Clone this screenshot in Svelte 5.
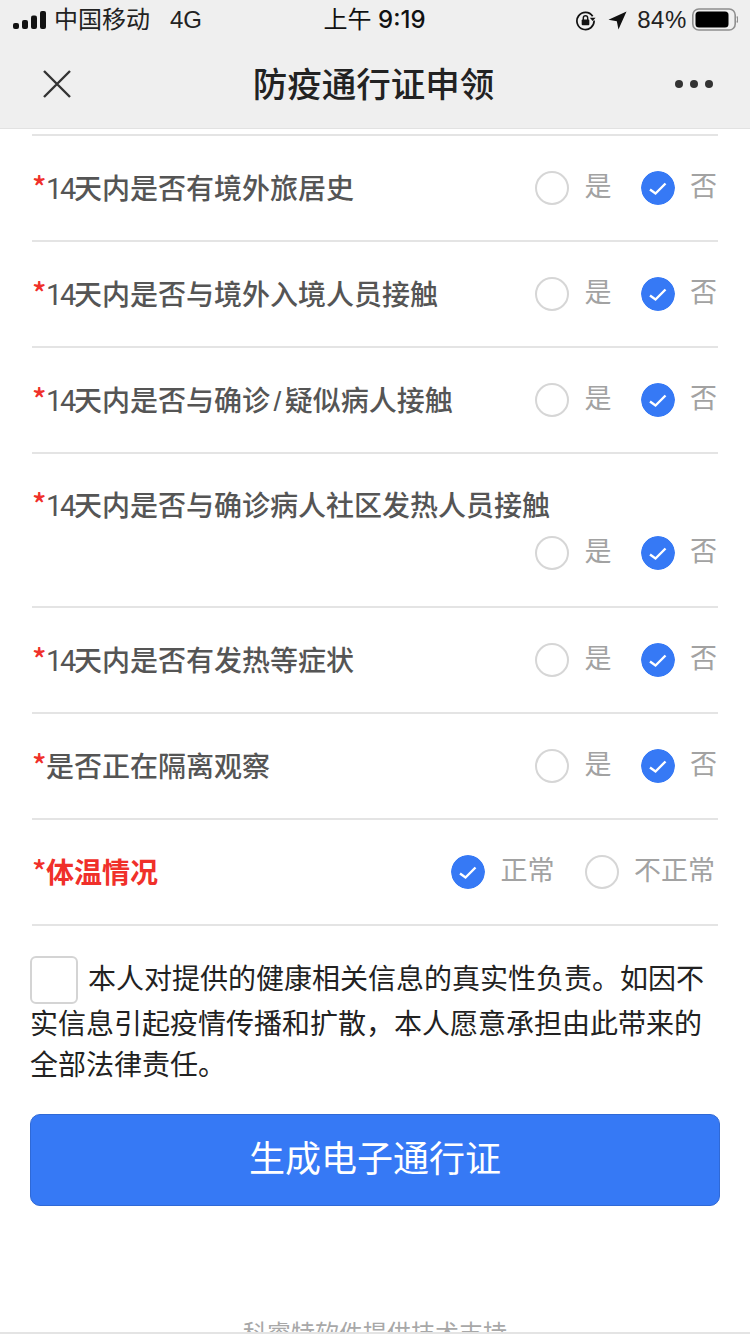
<script>
  const questions = [
    { days: '14', label: '天内是否有境外旅居史' },
    { days: '14', label: '天内是否与境外入境人员接触' },
    { days: '14', label: '天内是否与确诊', slash: '疑似病人接触' },
    { days: '14', label: '天内是否与确诊病人社区发热人员接触', wrap: true },
    { days: '14', label: '天内是否有发热等症状' },
    { label: '是否正在隔离观察' }
  ];
</script>

{#snippet radio(text, on)}
  <span class="option">
    {#if on}
      <svg class="dot" viewBox="0 0 34 34" aria-hidden="true">
        <circle cx="17" cy="17" r="17" fill="#3679f5" />
        <path d="M9 18.500l5.500 4L24.500 12.500" fill="none" stroke="#fff" stroke-width="2.400" />
      </svg>
    {:else}
      <span class="dot empty"></span>
    {/if}
    <span class="option-text">{text}</span>
  </span>
{/snippet}

<div class="page">
  <header class="top">
    <div class="status">
      <div class="status-left">
        <svg class="signal" viewBox="0 0 34 18" aria-hidden="true">
          <rect x="0" y="12" width="6" height="6" rx="2" />
          <rect x="9" y="9" width="6" height="9" rx="2" />
          <rect x="18" y="4.500" width="6" height="13.500" rx="2" />
          <rect x="27" y="0" width="6" height="18" rx="2" />
        </svg>
        <span class="carrier">中国移动</span>
        <span class="net">4G</span>
      </div>
      <div class="clock">上午 <span class="time">9:19</span></div>
      <div class="status-right">
        <svg class="lock" viewBox="0 0 22 22" aria-hidden="true">
          <path d="M18.500 6.500A9 9 0 1 0 20 11" fill="none" stroke="#111" stroke-width="1.800" />
          <path d="M15.500 8h6l-3 3.500z" fill="#111" />
          <rect x="7" y="10" width="8" height="6" rx="1" fill="#111" />
          <path d="M8.700 10.500V8.300a2.300 2.300 0 0 1 4.600 0V10.500" fill="none" stroke="#111" stroke-width="1.500" />
        </svg>
        <svg class="arrow" viewBox="0 0 20 20" aria-hidden="true">
          <path d="M19.500 .5L.5 9.200l8.800 1.500L11 19.500z" fill="#111" />
        </svg>
        <span class="pct">84%</span>
        <svg class="battery" viewBox="0 0 46 24" aria-hidden="true">
          <rect x=".8" y="1" width="42.400" height="21" rx="6" fill="none" stroke="#8f8f8f" stroke-width="1.600" />
          <rect x="3.500" y="3.500" width="33" height="16" rx="3.500" fill="#000" />
          <path d="M45 8.500c.8 1.500.8 4.500 0 6" fill="none" stroke="#8f8f8f" stroke-width="1.500" />
        </svg>
      </div>
    </div>
    <nav class="nav">
      <svg class="close" viewBox="0 0 30 30" aria-hidden="true">
        <path d="M2 2l26 26M28 2L2 28" fill="none" stroke="#333" stroke-width="2.400" />
      </svg>
      <h1>防疫通行证申领</h1>
      <div class="more" aria-hidden="true"><i></i><i></i><i></i></div>
    </nav>
  </header>

  <main class="form">
    {#each questions as q}
      <div class="row" class:wrap={q.wrap}>
        <div class="label"><span class="star">*</span>{#if q.days}<span class="days">{q.days}</span>{/if}{q.label}{#if q.slash}<span class="slash">/</span>{q.slash}{/if}</div>
        <div class="options">
          {@render radio('是', false)}
          {@render radio('否', true)}
        </div>
      </div>
    {/each}
    <div class="row">
      <div class="label alert"><span class="star">*</span>体温情况</div>
      <div class="options tight">
        {@render radio('正常', true)}
        {@render radio('不正常', false)}
      </div>
    </div>
  </main>

  <section class="pledge">
    <span class="box"></span>本人对提供的健康相关信息的真实性负责。如因不实信息引起疫情传播和扩散，本人愿意承担由此带来的全部法律责任。
  </section>

  <button class="submit"><span>生成电子通行证</span></button>

  <footer class="credit">科睿特软件提供技术支持</footer>
</div>

<style>
  :global(body) {
    margin: 0;
    background: #fff;
  }

  .page {
    position: relative;
    width: 750px;
    height: 1334px;
    overflow: hidden;
    font-family: "Liberation Sans", "Noto Sans CJK SC", sans-serif;
    background: #fff;
  }

  .top {
    height: 128px;
    background: #efefef;
    border-bottom: 1px solid #e2e2e2;
  }

  .status {
    height: 40px;
    line-height: 40px;
    display: grid;
    grid-template-columns: 1fr auto 1fr;
    align-items: center;
    padding: 0 12px 0 13px;
    color: #111;
  }

  .status-left,
  .status-right {
    display: flex;
    align-items: center;
  }

  .status-right {
    justify-content: flex-end;
  }

  .signal {
    width: 34px;
    height: 18px;
    fill: #111;
    margin-right: 7px;
  }

  .carrier,
  .net,
  .pct {
    font-size: 24px;
    color: #222;
  }

  .net {
    margin-left: 20px;
  }

  .clock {
    font-size: 24px;
    color: #111;
    padding-right: 2px;
  }

  .time {
    font-family: Inter, "Liberation Sans", sans-serif;
    font-weight: 500;
  }

  .lock {
    width: 21px;
    height: 21px;
    margin-right: 12px;
  }

  .arrow {
    width: 19px;
    height: 19px;
    margin-right: 10px;
  }

  .pct {
    margin-right: 5px;
    letter-spacing: 0.6px;
  }

  .battery {
    width: 46px;
    height: 24px;
  }

  .nav {
    height: 88px;
    display: flex;
    align-items: center;
    justify-content: space-between;
    padding: 0 37px 0 42px;
  }

  .close {
    width: 30px;
    height: 30px;
  }

  h1 {
    margin: -4px 0 0;
    padding-right: 3px;
    box-sizing: border-box;
    font-size: 34.500px;
    font-weight: 500;
    color: #222;
    position: absolute;
    left: 0;
    width: 750px;
    text-align: center;
    pointer-events: none;
  }

  .more {
    display: flex;
    gap: 7px;
  }

  .more i {
    width: 8px;
    height: 8px;
    border-radius: 50%;
    background: #333;
  }

  .form {
    margin: 5px 32px 0;
    border-top: 2px solid #e4e4e4;
  }

  .row {
    height: 104px;
    border-bottom: 2px solid #e4e4e4;
    display: flex;
    align-items: center;
    justify-content: space-between;
  }

  .row.wrap {
    height: 152px;
    display: block;
  }

  .row.wrap .label {
    padding: 31px 0 0;
    line-height: 42px;
  }

  .row.wrap .options {
    margin-top: 8px;
    justify-content: flex-end;
  }

  .label {
    font-size: 28px;
    font-weight: 500;
    color: #555;
    white-space: nowrap;
    padding-bottom: 3px;
  }

  .days {
    font-family: Roboto, "Liberation Sans", sans-serif;
    font-size: 29px;
    font-weight: 400;
    letter-spacing: -2.300px;
  }

  .slash {
    padding: 0 3.500px;
  }

  .label.alert {
    color: #f0302a;
    font-weight: 700;
  }

  .star {
    display: inline-block;
    width: 14px;
    color: #f0302a;
    font-family: "Noto Sans CJK SC", sans-serif;
    font-size: 30px;
    line-height: 1;
    font-weight: 500;
  }

  .options {
    display: flex;
    align-items: center;
    gap: 29px;
    padding-right: 1px;
  }

  .options.tight {
    gap: 30px;
    padding-right: 3px;
  }

  .option {
    display: inline-flex;
    align-items: center;
    gap: 15.500px;
  }

  .dot {
    width: 34px;
    height: 34px;
    display: block;
    box-sizing: border-box;
    border-radius: 50%;
  }

  .dot.empty {
    border: 2px solid #d6d6d6;
    background: #fff;
  }

  .option-text {
    font-size: 27px;
    color: #a2a2a2;
    line-height: 34px;
    margin-top: -2px;
  }

  .pledge {
    margin: 33px 30px 0;
    font-size: 28px;
    line-height: 41.500px;
    color: #222;
  }

  .box {
    display: inline-block;
    width: 48px;
    height: 48px;
    box-sizing: border-box;
    border: 2px solid #d4d4d4;
    border-radius: 6px;
    vertical-align: middle;
    margin: -4px 10px 0 0;
  }

  .submit {
    display: block;
    width: 690px;
    height: 92px;
    margin: 27px 30px 0;
    padding: 0 0 7px;
    border: 1px solid #2f69d6;
    border-radius: 10px;
    background: #3679f5;
    color: #fff;
    font-family: inherit;
    font-size: 36px;
  }

  .credit {
    position: absolute;
    left: 0;
    right: 0;
    top: 1316px;
    text-align: center;
    font-size: 24px;
    line-height: 36px;
    color: #a8a8a8;
  }

  .page::after {
    content: "";
    position: absolute;
    left: 0;
    right: 0;
    bottom: 0;
    height: 2px;
    background: #e4e4e4;
  }
</style>
